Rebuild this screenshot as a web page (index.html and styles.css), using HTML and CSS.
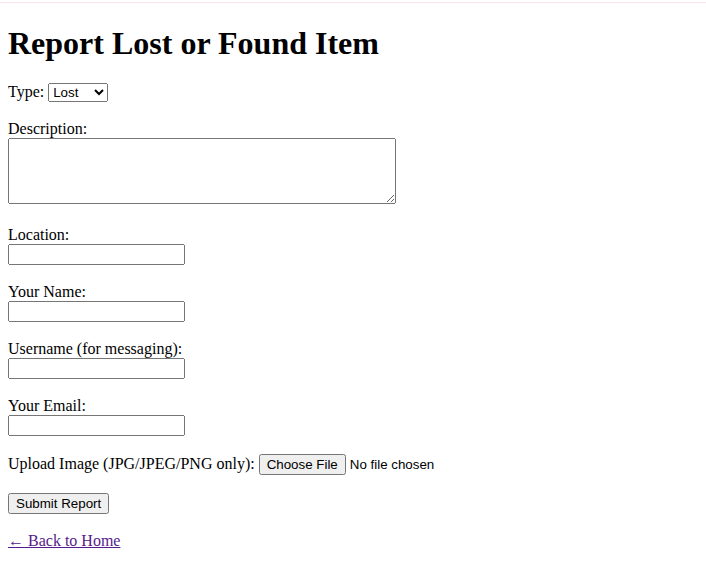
FILE: index.html
```html
<!DOCTYPE html>
<html>
<head>
<meta charset="utf-8">
<title>Report Lost or Found Item</title>
<link rel="stylesheet" href="styles.css">
</head>
<body class="page">
<div class="topline"></div>
<h1 class="title">Report Lost or Found Item</h1>
<form class="report-form">
  <label>Type:</label>
  <select class="type-select" name="type">
    <option>Lost</option>
    <option>Found</option>
  </select><br><br>

  <label>Description:</label><br>
  <textarea class="desc" name="description" rows="4" cols="50"></textarea><br><br>

  <label>Location:</label><br>
  <input class="field" type="text" name="location"><br><br>

  <label>Your Name:</label><br>
  <input class="field" type="text" name="name"><br><br>

  <label>Username (for messaging):</label><br>
  <input class="field" type="text" name="username"><br><br>

  <label>Your Email:</label><br>
  <input class="field" type="email" name="email"><br><br>

  <label>Upload Image (JPG/JPEG/PNG only):</label>
  <input type="file" name="image" accept=".jpg,.jpeg,.png"><br><br>

  <button class="submit" type="submit">Submit Report</button>
</form>
<br>
<a class="back" href="#">&larr; Back to Home</a>
</body>
</html>
```
FILE: styles.css
```css
.page {
  margin: 8px;
  font-family: "Liberation Serif", "Times New Roman", serif;
  font-size: 16px;
  color: #000;
  background: #fff;
}
.topline {
  position: absolute;
  left: 0;
  right: 0;
  top: 2px;
  height: 1px;
  background: #fbe3ec;
}
.title {
  font-size: 32px;
  font-weight: bold;
  margin: 17px 0 21px;
}
.report-form {
  margin: 0;
}
.desc {
  box-sizing: border-box;
  width: 388px;
  height: 66px;
}
.field {
  box-sizing: border-box;
  width: 177px;
}
.type-select {
  font-family: "Liberation Sans", Arial, sans-serif;
  font-size: 13.33px;
}
.back {
  color: #551a8b;
}
```
